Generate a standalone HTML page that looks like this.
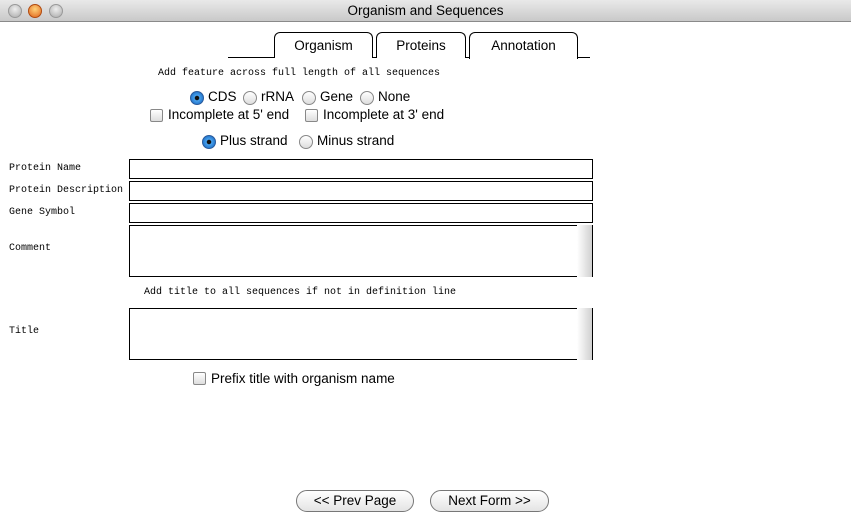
<!DOCTYPE html>
<html><head><style>
*{margin:0;padding:0;box-sizing:border-box}
body{width:851px;height:527px;background:#fff;position:relative;overflow:hidden;font-family:"Liberation Sans",sans-serif;font-size:13px;color:#000}
.a{position:absolute}
.tb{left:0;top:0;width:851px;height:22px;background:linear-gradient(#e9e9e9,#c9c9c9);border-bottom:1px solid #8a8a8a;text-align:center;line-height:22px;font-size:13.5px}
.dot{top:4px;width:14px;height:14px;border-radius:50%;background:radial-gradient(circle at 50% 35%,#eee,#aaa);border:1px solid #999}
.m{font-family:"Liberation Mono",monospace;font-size:10px;white-space:nowrap}
.tab{top:32px;height:26px;border:1px solid #000;border-bottom:none;border-radius:6px 6px 0 0;text-align:center;line-height:26px;font-size:13.5px;background:#fff}
.box{border:1px solid #000;background:#fff}
.ta{border:1px solid #000;border-right:none;background:#fff}
.sb{width:16px;background:linear-gradient(90deg,#fff,#d0d0d0);border-right:1px solid #000}
.r{width:14px;height:14px;border-radius:50%;border:1px solid #888;background:linear-gradient(#fff,#ddd)}
.r.on{background:radial-gradient(circle,#111 0 2px,#4aa3ee 2.5px,#1d6fc7 7px);border-color:#2a5a9a}
.c{width:13px;height:13px;border:1px solid #888;border-radius:2px;background:linear-gradient(#fff,#ddd)}
.t{white-space:nowrap;font-size:13.5px}
.btn{top:490px;height:22px;border:1px solid #777;border-radius:11px;background:linear-gradient(#fff,#e4e4e4);text-align:center;line-height:20px;font-size:13.5px}
</style></head><body>
<div class="a tb">Organism and Sequences</div>
<div class="a dot" style="left:8px"></div>
<div class="a dot" style="left:28px;background:radial-gradient(circle at 50% 35%,#ffd27a,#e0631a);border-color:#b04a10"></div>
<div class="a dot" style="left:49px"></div>

<div class="a" style="left:228px;top:57px;width:362px;height:1px;background:#000"></div>
<div class="a tab" style="left:274px;width:99px">Organism</div>
<div class="a tab" style="left:376px;width:90px">Proteins</div>
<div class="a tab" style="left:469px;width:109px;height:27px">Annotation</div>

<div class="a m" style="left:158px;top:68px">Add feature across full length of all sequences</div>

<div class="a r on" style="left:190px;top:91px"></div><div class="a t" style="left:208px;top:89px">CDS</div>
<div class="a r" style="left:243px;top:91px"></div><div class="a t" style="left:261px;top:89px">rRNA</div>
<div class="a r" style="left:302px;top:91px"></div><div class="a t" style="left:320px;top:89px">Gene</div>
<div class="a r" style="left:360px;top:91px"></div><div class="a t" style="left:378px;top:89px">None</div>

<div class="a c" style="left:150px;top:109px"></div><div class="a t" style="left:168px;top:107px">Incomplete at 5' end</div>
<div class="a c" style="left:305px;top:109px"></div><div class="a t" style="left:323px;top:107px">Incomplete at 3' end</div>

<div class="a r on" style="left:202px;top:135px"></div><div class="a t" style="left:220px;top:133px">Plus strand</div>
<div class="a r" style="left:299px;top:135px"></div><div class="a t" style="left:317px;top:133px">Minus strand</div>

<div class="a m" style="left:9px;top:163px">Protein Name</div>
<div class="a box" style="left:129px;top:159px;width:464px;height:20px"></div>
<div class="a m" style="left:9px;top:185px">Protein Description</div>
<div class="a box" style="left:129px;top:181px;width:464px;height:20px"></div>
<div class="a m" style="left:9px;top:207px">Gene Symbol</div>
<div class="a box" style="left:129px;top:203px;width:464px;height:20px"></div>
<div class="a m" style="left:9px;top:243px">Comment</div>
<div class="a ta" style="left:129px;top:225px;width:448px;height:52px"></div>
<div class="a sb" style="left:577px;top:225px;height:52px"></div>

<div class="a m" style="left:144px;top:287px">Add title to all sequences if not in definition line</div>

<div class="a m" style="left:9px;top:326px">Title</div>
<div class="a ta" style="left:129px;top:308px;width:448px;height:52px"></div>
<div class="a sb" style="left:577px;top:308px;height:52px"></div>

<div class="a c" style="left:193px;top:372px"></div><div class="a t" style="left:211px;top:371px">Prefix title with organism name</div>

<div class="a btn" style="left:296px;width:118px">&lt;&lt; Prev Page</div>
<div class="a btn" style="left:430px;width:119px">Next Form &gt;&gt;</div>
</body></html>
